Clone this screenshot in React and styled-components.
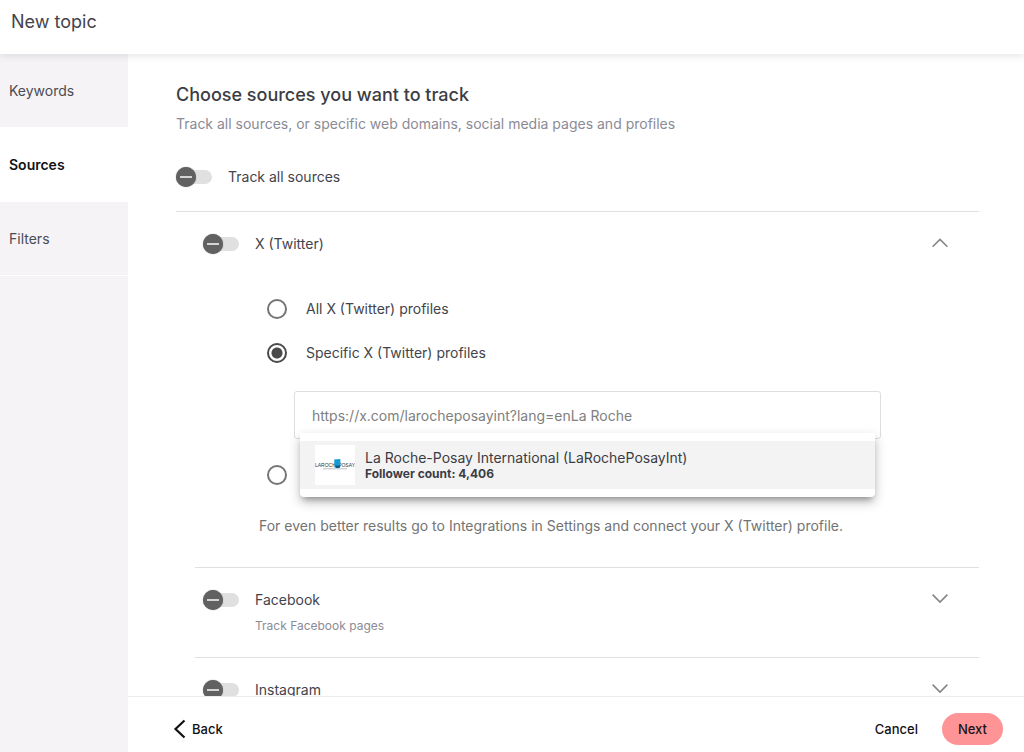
import React, { useState } from "react";
import styled, { createGlobalStyle } from "styled-components";

const GlobalStyle = createGlobalStyle`
  *, *::before, *::after { box-sizing: border-box; }
  body {
    margin: 0;
    background: #ffffff;
    color: #43444b;
    font-family: Inter, "Liberation Sans", sans-serif;
    font-size: 14px;
    line-height: 20px;
  }
  button, input { font: inherit; color: inherit; }
`;

const Page = styled.div`
  display: flex;
  flex-direction: column;
  height: 100vh;
`;

const Header = styled.header`
  position: relative;
  z-index: 1;
  flex: none;
  height: 54px;
  padding: 10px 11px;
  background: #ffffff;
  box-shadow: 0 1px 8px rgba(60, 64, 90, 0.16);
`;

const PageTitle = styled.h1`
  margin: 0;
  font-size: 18px;
  line-height: 24px;
  font-weight: 400;
`;

const Body = styled.div`
  display: flex;
  flex: 1;
  min-height: 0;
`;

const Sidebar = styled.nav`
  display: flex;
  flex-direction: column;
  flex: none;
  gap: 1px;
  width: 128px;
  background: #f5f3f5;
`;

const Step = styled.a`
  display: flex;
  align-items: center;
  height: 73px;
  padding: 0 9px;
  color: ${(p) => (p.$active ? "#111114" : "#4b4c53")};
  background: ${(p) => (p.$active ? "#ffffff" : "transparent")};
  box-shadow: 0 1px 0 #ffffff;
  font-weight: ${(p) => (p.$active ? 600 : 400)};
  text-decoration: none;
`;

const Main = styled.main`
  display: flex;
  flex-direction: column;
  flex: 1;
  min-width: 0;
`;

const Content = styled.div`
  flex: 1;
  min-height: 0;
  overflow: hidden;
  padding: 29px 45px 0 48px;
`;

const Heading = styled.h2`
  margin: 0 0 7px;
  font-size: 18px;
  line-height: 24px;
  font-weight: 500;
  color: #3c3d44;
`;

const Intro = styled.p`
  margin: 0;
  color: #8b8b96;
`;

const AllSources = styled.div`
  padding: 33px 0 24px;
  border-bottom: 1px solid #e0e0e0;
`;

const SourceList = styled.div`
  padding-left: 19px;
`;

const Source = styled.section`
  padding: 22px 31px ${(p) => (p.$open ? 31 : 21)}px 8px;

  & + & {
    position: relative;
    border-top: 1px solid #e0e0e0;
  }
`;

const SourceHeader = styled.div`
  display: flex;
  align-items: center;
  justify-content: space-between;
  height: 20px;
`;

const SwitchLabel = styled.label`
  display: flex;
  align-items: center;
  gap: 16px;
  height: 20px;
`;

const Switch = styled.input`
  appearance: none;
  position: relative;
  flex: none;
  width: 36px;
  height: 20px;
  margin: 0;

  &::before {
    content: "";
    position: absolute;
    inset: 3px 0;
    border-radius: 7px;
    background: #e0e0e0;
  }

  &::after {
    content: "";
    position: absolute;
    inset: 0 16px 0 0;
    border-radius: 50%;
    background: linear-gradient(#d4d4d4, #d4d4d4) center / 12px 2px no-repeat #616161;
    box-shadow: 0 0 1px #616161;
  }
`;

const Hint = styled.p`
  margin: 6px 0 0 52px;
  font-size: 12px;
  color: #8b8b96;
`;

const IconButton = styled.button`
  display: flex;
  padding: 0;
  border: 0;
  background: none;
  color: #858585;
`;

const Options = styled.div`
  display: flex;
  flex-direction: column;
  gap: 24px;
  margin: 45px 0 0 64px;
`;

const Option = styled.label`
  display: flex;
  align-items: center;
  gap: 19px;
  height: 20px;
`;

const Radio = styled.input`
  appearance: none;
  flex: none;
  width: 20px;
  height: 20px;
  margin: 0;
  border: 2px solid #757575;
  border-radius: 50%;

  &:checked {
    border-color: #4a4a4a;
    background: radial-gradient(circle, #4a4a4a 5px, transparent 6px);
  }
`;

const ProfileSearch = styled.div`
  position: relative;
  margin: 4px 67px 2px 27px;
`;

const SearchInput = styled.input`
  display: block;
  width: 100%;
  height: 48px;
  padding: 0 17px;
  border: 1px solid #dedee0;
  border-radius: 3px;
  outline: 0;
  background: #ffffff;
  color: #808080;
`;

const Suggestions = styled.div`
  position: absolute;
  z-index: 1;
  top: 42px;
  left: 6px;
  right: 6px;
  padding: 8px 0;
  border-radius: 0 0 4px 4px;
  background: #ffffff;
  box-shadow: 0 5px 6px -3px rgba(0, 0, 0, 0.3), 0 5px 12px rgba(0, 0, 0, 0.24);
`;

const Suggestion = styled.button`
  display: flex;
  align-items: center;
  gap: 10px;
  width: 100%;
  height: 48px;
  padding: 0 15px;
  border: 0;
  background: #f3f3f3;
  text-align: left;
`;

const Profile = styled.span`
  display: flex;
  flex-direction: column;
  color: #3c3d44;
  line-height: 18px;
`;

const Followers = styled.strong`
  font-size: 12px;
  line-height: 14px;
  font-weight: 700;
`;

const Note = styled.p`
  margin: 31px 0 0 56px;
  color: #737373;
`;

const Footer = styled.footer`
  display: flex;
  align-items: center;
  flex: none;
  gap: 24px;
  height: 56px;
  padding: 8px 21px 0 45px;
  border-top: 1px solid #ececee;
  background: #ffffff;
  font-size: 13px;
`;

const TextButton = styled.button`
  display: flex;
  align-items: center;
  gap: 6px;
  padding: 0;
  border: 0;
  background: none;
  color: #111114;
  font-weight: 500;
`;

const Actions = styled.div`
  display: flex;
  gap: 24px;
  margin-left: auto;
`;

const NextButton = styled.button`
  height: 32px;
  padding: 0 16px;
  border: 0;
  border-radius: 16px;
  background: #ff9496;
  color: #1b1416;
  font-weight: 500;
`;

function Chevron({ up }) {
  return (
    <svg width="16" height="16" viewBox="0 0 16 16" fill="none" stroke="currentColor" strokeWidth="1.6" aria-hidden="true">
      <path d={up ? "M0.6 10.8 8 3.4l7.4 7.4" : "M0.6 2.6 8 10l7.4-7.4"} />
    </svg>
  );
}

function BrandPicture() {
  return (
    <svg width="40" height="40" viewBox="0 0 40 40" role="img" aria-label="La Roche-Posay">
      <rect width="40" height="40" fill="#ffffff" />
      <g fontFamily="Liberation Sans, sans-serif" fontSize="5" fill="#33363b">
        <text x="0" y="22">LAROCH</text>
        <text x="40" y="22" textAnchor="end">POSAY</text>
      </g>
      <path d="M19.2 14.5 25.4 14v7.5l-1 1h-5z" fill="#159bd3" />
      <path d="M20 20.5h5.5l-1 2.4H21z" fill="#0b5c8c" />
      <path d="M8 23.8h24" stroke="#a9adb2" strokeWidth="0.8" />
    </svg>
  );
}

function SourceRow({ name, hint, open, children }) {
  return (
    <Source $open={open}>
      <SourceHeader>
        <SwitchLabel>
          <Switch type="checkbox" role="switch" />
          {name}
        </SwitchLabel>
        <IconButton type="button" aria-label={name} aria-expanded={!!open}>
          <Chevron up={open} />
        </IconButton>
      </SourceHeader>
      {hint && <Hint>{hint}</Hint>}
      {children}
    </Source>
  );
}

export default function App() {
  const [scope, setScope] = useState("specific");
  const [query, setQuery] = useState("https://x.com/larocheposayint?lang=enLa Roche");
  const radio = (value) => ({
    type: "radio",
    name: "scope",
    checked: scope === value,
    onChange: () => setScope(value),
  });

  return (
    <Page>
      <GlobalStyle />
      <Header>
        <PageTitle>New topic</PageTitle>
      </Header>
      <Body>
        <Sidebar>
          <Step href="#keywords">Keywords</Step>
          <Step href="#sources" $active aria-current="step">Sources</Step>
          <Step href="#filters">Filters</Step>
        </Sidebar>
        <Main>
          <Content>
            <Heading>Choose sources you want to track</Heading>
            <Intro>Track all sources, or specific web domains, social media pages and profiles</Intro>
            <AllSources>
              <SwitchLabel>
                <Switch type="checkbox" role="switch" />
                Track all sources
              </SwitchLabel>
            </AllSources>
            <SourceList>
              <SourceRow name="X (Twitter)" open>
                <Options>
                  <Option>
                    <Radio {...radio("all")} />
                    All X (Twitter) profiles
                  </Option>
                  <Option>
                    <Radio {...radio("specific")} />
                    Specific X (Twitter) profiles
                  </Option>
                  <ProfileSearch>
                    <SearchInput
                      type="text"
                      aria-label="X (Twitter) profile"
                      value={query}
                      onChange={(e) => setQuery(e.target.value)}
                    />
                    <Suggestions>
                      <Suggestion type="button">
                        <BrandPicture />
                        <Profile>
                          La Roche-Posay International (LaRochePosayInt)
                          <Followers>Follower count: 4,406</Followers>
                        </Profile>
                      </Suggestion>
                    </Suggestions>
                  </ProfileSearch>
                  <Option>
                    <Radio {...radio("own")} aria-label="Connected profiles" />
                  </Option>
                </Options>
                <Note>
                  For even better results go to Integrations in Settings and connect your X (Twitter) profile.
                </Note>
              </SourceRow>
              <SourceRow name="Facebook" hint="Track Facebook pages" />
              <SourceRow name="Instagram" />
            </SourceList>
          </Content>
          <Footer>
            <TextButton type="button">
              <svg width="13" height="20" viewBox="0 0 13 20" fill="none" stroke="currentColor" strokeWidth="2.2" aria-hidden="true">
                <path d="M11.5 1.5 2.5 10l9 8.5" />
              </svg>
              Back
            </TextButton>
            <Actions>
              <TextButton type="button">Cancel</TextButton>
              <NextButton type="button">Next</NextButton>
            </Actions>
          </Footer>
        </Main>
      </Body>
    </Page>
  );
}
